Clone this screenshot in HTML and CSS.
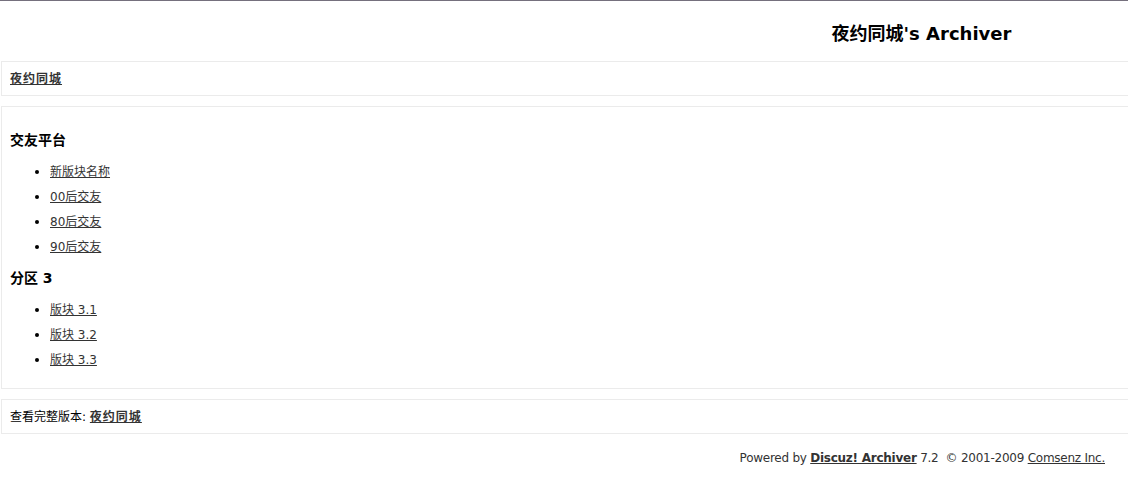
FILE: index.html
```html
<!DOCTYPE html>
<html>
<head>
<meta charset="utf-8">
<title>夜约同城's Archiver</title>
<link rel="stylesheet" href="styles.css">
</head>
<body>
<div class="header">
  <h1 class="title">夜约同城's Archiver</h1>
</div>
<div class="box nav">
  <a class="strong" href="#">夜约同城</a>
</div>
<div class="box content">
  <h2 class="group">交友平台</h2>
  <ul class="forums">
    <li><a href="#">新版块名称</a></li>
    <li><a href="#">00后交友</a></li>
    <li><a href="#">80后交友</a></li>
    <li><a href="#">90后交友</a></li>
  </ul>
  <h2 class="group">分区 3</h2>
  <ul class="forums">
    <li><a href="#">版块 3.1</a></li>
    <li><a href="#">版块 3.2</a></li>
    <li><a href="#">版块 3.3</a></li>
  </ul>
</div>
<div class="box nav">
  查看完整版本: <a class="strong" href="#">夜约同城</a>
</div>
<div class="footer">
  Powered by <a class="strong" href="#">Discuz! Archiver</a> 7.2&nbsp; &copy; 2001-2009 <a href="#">Comsenz Inc.</a>
</div>
</body>
</html>
```

FILE: styles.css
```css
html, body {
  margin: 0;
  padding: 0;
  background: #fff;
}
body {
  border-top: 1px solid #75707d;
  font-family: "DejaVu Sans", Verdana, "Noto Sans CJK SC", sans-serif;
  font-size: 12px;
  line-height: 15px;
  color: #000;
  padding: 0 0 0 1px;
}
a {
  color: #333;
  text-decoration: underline;
}
a.strong {
  font-weight: bold;
}
.header {
  padding: 21px 0 15px 714px;
  text-align: center;
}
.title {
  margin: 0;
  font-size: 18px;
  line-height: 24px;
  font-weight: bold;
}
.box {
  border: 1px solid #ebebeb;
  border-right: none;
}
.nav {
  padding: 10px 8px 8px;
}
.nav a.strong {
  letter-spacing: 1px;
}
.content {
  margin: 10px 0;
  padding: 14px 8px 16px;
}
.group {
  margin: 9px 0;
  font-size: 14px;
  line-height: 20px;
  font-weight: bold;
}
.forums {
  margin: 0;
  padding-left: 40px;
}
.forums li {
  height: 25px;
  line-height: 25px;
  overflow: visible;
}
.forums li::marker {
  font-size: 14px;
}
.footer {
  padding: 17px 23px 0 0;
  text-align: right;
  color: #333;
  letter-spacing: -0.25px;
}
```
